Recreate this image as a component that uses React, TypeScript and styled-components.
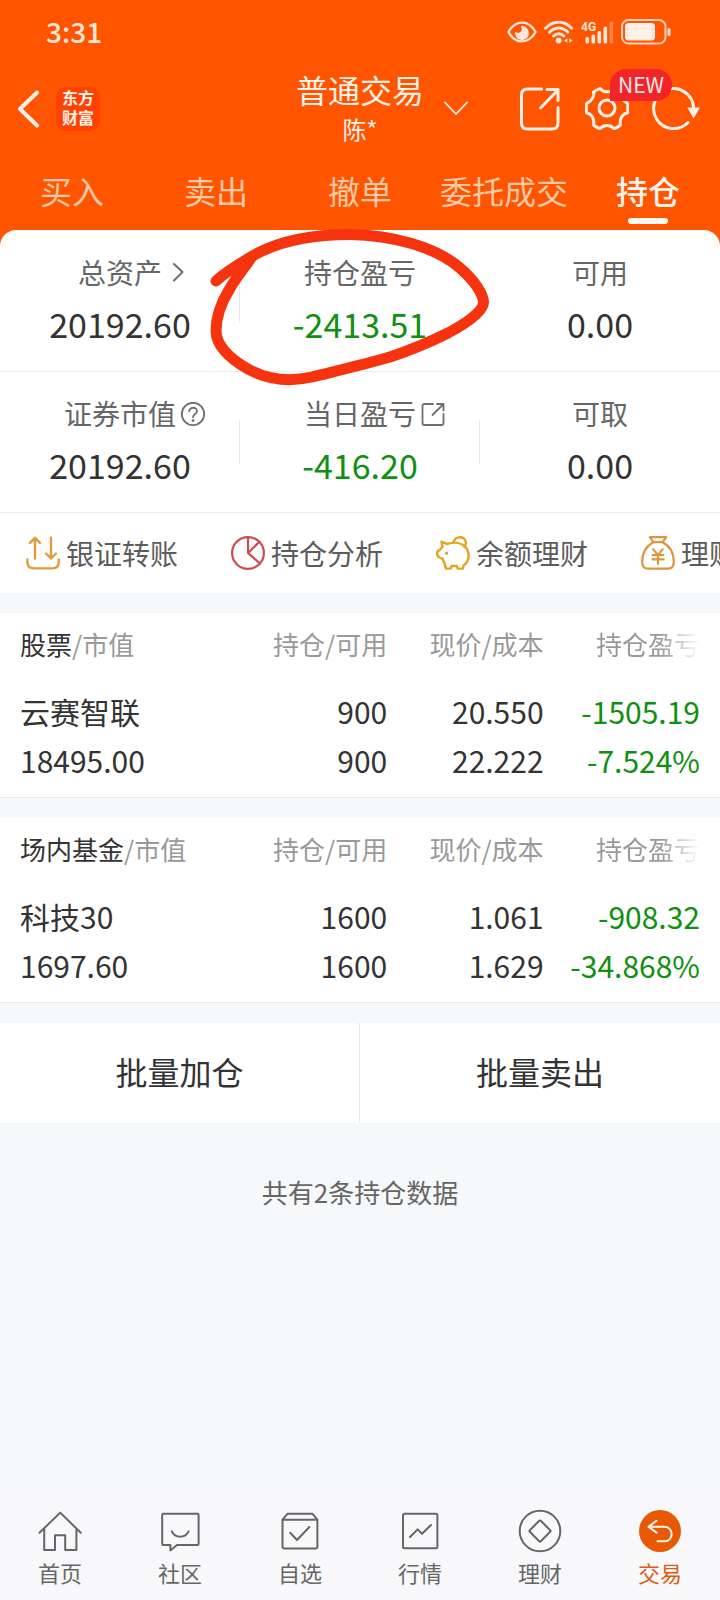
import React from "react";
import styled, { createGlobalStyle } from "styled-components";

const GlobalStyle = createGlobalStyle`
  *, *::before, *::after { box-sizing: border-box; }
  body {
    margin: 0;
    background: #f6f8fa;
    color: #333;
    font-family: "Noto Sans CJK SC", "Noto Sans", sans-serif;
    -webkit-font-smoothing: antialiased;
  }
  button {
    margin: 0;
    padding: 0;
    border: 0;
    background: none;
    color: inherit;
    font: inherit;
    cursor: pointer;
  }
  a { color: inherit; text-decoration: none; }
  svg { display: block; flex: none; }
`;

const Page = styled.div`
  min-height: 100vh;
  display: flex;
  flex-direction: column;
`;

/* ---------- header ---------- */

const Header = styled.header`
  background: #ff5500;
  color: #fff1e8;
  padding-bottom: 16px;
`;

const StatusBar = styled.div`
  height: 64px;
  padding: 0 49px 0 46px;
  display: flex;
  align-items: center;
  justify-content: space-between;
  color: #ffe6d6;
`;

const Clock = styled.time`
  padding-bottom: 2px;
  font-size: 28px;
  line-height: 40px;
  font-weight: 500;
`;

const StatusIcons = styled.div`
  display: flex;
  align-items: center;
  gap: 7px;
`;

const TitleBar = styled.div`
  height: 90px;
  display: grid;
  grid-template-columns: 1fr auto 1fr;
  align-items: center;
`;

const TitleStart = styled.div`
  display: flex;
  align-items: center;
  gap: 16px;
  padding-left: 17px;
`;

const Brand = styled.span`
  width: 44px;
  height: 44px;
  border-radius: 10px;
  background: #ff4203;
  display: flex;
  flex-direction: column;
  justify-content: center;
  text-align: center;
  font-family: "Liberation Serif", "Noto Sans CJK SC", serif;
  font-size: 16px;
  line-height: 20px;
  font-weight: 700;
`;

const TitleBlock = styled.div`
  padding-bottom: 2px;
  text-align: center;
`;

const Title = styled.h1`
  margin: 0;
  font-size: 32px;
  line-height: 42px;
  font-weight: 400;
`;

const Account = styled.div`
  font-size: 24px;
  line-height: 38px;
`;

const TitleEnd = styled.div`
  display: flex;
  align-items: center;
  justify-content: space-between;
  padding: 0 20px;
`;

const Actions = styled.div`
  display: flex;
  gap: 23px;
`;

const IconButton = styled.button<{ $raised?: boolean }>`
  position: relative;
  z-index: ${(p) => (p.$raised ? 1 : 0)};
  display: block;
`;

const NewBadge = styled.span`
  position: absolute;
  left: 25px;
  top: -18px;
  width: 62px;
  height: 32px;
  border-radius: 16px 16px 16px 0;
  background: #f02429;
  color: #ffe9e4;
  font-size: 21px;
  line-height: 31px;
  text-align: center;
`;

const Tabs = styled.nav`
  display: grid;
  grid-template-columns: repeat(5, 1fr);
  padding: 12px 0 6px;
`;

const Tab = styled.button<{ $active?: boolean }>`
  display: flex;
  flex-direction: column;
  align-items: center;
  gap: 4px;
  font-size: 32px;
  line-height: 48px;
  white-space: nowrap;
  color: ${(p) => (p.$active ? "#fff3ea" : "#ffc9a6")};
  font-weight: ${(p) => (p.$active ? 500 : 400)};

  &::after {
    content: "";
    width: 40px;
    height: 6px;
    border-radius: 3px;
    background: ${(p) => (p.$active ? "#fffaf3" : "transparent")};
  }
`;

/* ---------- summary ---------- */

const Summary = styled.section`
  position: relative;
  margin-top: -16px;
  padding-top: 1px;
  border-radius: 16px 16px 0 0;
  background: #fff;
`;

const SummaryRow = styled.div`
  display: grid;
  grid-template-columns: repeat(3, 1fr);
  border-bottom: 1px solid #ececec;
`;

const Metric = styled.div<{ $divider?: boolean }>`
  position: relative;
  padding: 21px 0 23px;
  text-align: center;

  &::after {
    content: "";
    display: ${(p) => (p.$divider ? "block" : "none")};
    position: absolute;
    right: 0;
    top: 48px;
    width: 1px;
    height: 44px;
    background: #e8e8e8;
  }
`;

const MetricLabel = styled.div`
  display: flex;
  justify-content: center;
  font-size: 28px;
  line-height: 40px;
  color: #666;
`;

const LabelText = styled.span`
  position: relative;
`;

const LabelIcon = styled.button`
  position: absolute;
  left: 100%;
  top: 9px;
  padding-left: 4px;
  color: #6e6e6e;
`;

const MetricValue = styled.div<{ $loss?: boolean }>`
  margin-top: 8px;
  font-size: 34px;
  line-height: 48px;
  color: ${(p) => (p.$loss ? "#0f900f" : "#333")};
`;

const Scribble = styled.svg`
  position: absolute;
  z-index: 2;
  left: calc(50% - 154px);
  top: -6px;
  pointer-events: none;
`;

/* ---------- shortcuts ---------- */

const Shortcuts = styled.nav`
  display: flex;
  gap: 53px;
  padding: 0 26px;
  background: #fff;
  overflow: hidden;
`;

const Shortcut = styled.button`
  flex: none;
  display: flex;
  align-items: center;
  gap: 6px;
  height: 80px;
  font-size: 28px;
  line-height: 40px;
  color: #5c5c5c;
`;

/* ---------- holdings ---------- */

const Holdings = styled.section`
  margin-top: 20px;
  padding: 0 20px;
  background: #fff;
  border-bottom: 1px solid #ececec;
`;

const Table = styled.table`
  width: 100%;
  table-layout: fixed;
  border-collapse: collapse;
`;

const Th = styled.th<{ $first?: boolean; $fade?: boolean }>`
  width: ${(p) => (p.$first ? "31%" : "23%")};
  height: 62px;
  padding: 0;
  font-size: 26px;
  line-height: 40px;
  font-weight: 400;
  white-space: nowrap;
  text-align: ${(p) => (p.$first ? "left" : "right")};
  color: #999;
  ${(p) =>
    p.$fade
      ? "mask-image: linear-gradient(to right, #000 calc(100% - 40px), transparent);"
      : ""}
`;

const Kind = styled.span`
  color: #333;
`;

const Td = styled.td<{ $first?: boolean; $loss?: boolean }>`
  padding: 12px 0;
  font-size: 30px;
  line-height: 49px;
  white-space: nowrap;
  text-align: ${(p) => (p.$first ? "left" : "right")};
  color: ${(p) => (p.$loss ? "#0f900f" : "#333")};
`;

const BatchActions = styled.div`
  margin-top: 20px;
  display: grid;
  grid-template-columns: 1fr 1fr;
  background: #fff;
`;

const BatchButton = styled.button`
  height: 100px;
  padding-bottom: 4px;
  font-size: 32px;
  line-height: 48px;

  &:first-child {
    border-right: 1px solid #e8e8e8;
  }
`;

const Count = styled.p`
  margin: 0;
  padding: 49px 0;
  text-align: center;
  font-size: 26px;
  line-height: 40px;
  color: #666;
`;

/* ---------- bottom bar ---------- */

const BottomNav = styled.nav`
  margin-top: auto;
  display: grid;
  grid-template-columns: repeat(6, 1fr);
  padding: 12px 0 13px;
  background: #f8f8fb;
`;

const NavItem = styled.a<{ $active?: boolean }>`
  display: flex;
  flex-direction: column;
  align-items: center;
  gap: 4px;
  font-size: 22px;
  line-height: 30px;
  color: ${(p) => (p.$active ? "#e05a10" : "#666")};
`;

/* ---------- icons ---------- */

const line = {
  fill: "none",
  stroke: "currentColor",
  strokeLinecap: "round" as const,
  strokeLinejoin: "round" as const,
};

const EyeIcon = () => (
  <svg width="30" height="22" viewBox="0 0 30 22" {...line} strokeWidth="2.4">
    <path d="M1.4 11C5 4.8 9.8 1.6 15 1.6S25 4.8 28.6 11C25 17.2 20.2 20.4 15 20.4S5 17.2 1.4 11Z" />
    <path
      d="M14 5.2A7 7 0 1 1 8.2 10.4C9.6 12.2 12.6 12.4 14 10.6C15 9.2 15 7 14 5.2Z"
      fill="currentColor"
      stroke="none"
    />
  </svg>
);

const WifiIcon = () => (
  <svg width="30" height="24" viewBox="0 0 30 24" {...line} strokeWidth="3">
    <path d="M1.6 8.2C9 .2 20.4 .2 27.6 8.2M5.6 12.2C11 6.6 18.4 6.6 23.8 12.2M9.6 16C12.6 13 16.8 13 19.8 16" />
    <circle cx="14.6" cy="20.6" r="3" fill="currentColor" stroke="none" />
    <path
      d="M23.4 18.2V23L20 20.6ZM25.2 18.2V23L28.8 20.6Z"
      fill="currentColor"
      stroke="none"
    />
  </svg>
);

const SignalText = styled.text`
  font-family: Roboto, sans-serif;
  font-size: 12px;
  font-weight: 700;
`;

const SignalIcon = () => (
  <svg width="33" height="24" viewBox="0 0 33 24" fill="currentColor">
    <SignalText x="0" y="11">
      4G
    </SignalText>
    <rect x="4.5" y="17" width="3.6" height="6.5" rx="1.5" />
    <rect x="10.5" y="14.5" width="3.6" height="9" rx="1.5" />
    <rect x="16.5" y="11" width="3.6" height="12.5" rx="1.5" />
    <rect x="22.5" y="6.5" width="3.6" height="17" rx="1.5" />
    <rect x="28.5" y="1.5" width="3.6" height="22" rx="1.5" opacity="0.35" />
  </svg>
);

const BatteryIcon = () => (
  <svg width="50" height="26" viewBox="0 0 50 26" fill="currentColor">
    <rect
      x="1"
      y="1"
      width="43.5"
      height="23.5"
      rx="6.5"
      fill="none"
      stroke="currentColor"
      strokeWidth="2"
      opacity="0.85"
    />
    <rect x="4" y="4" width="30" height="17.5" rx="3.5" fill="#ffefe6" />
    <rect x="46.5" y="9" width="3" height="8" rx="1.5" />
  </svg>
);

const BackIcon = () => (
  <svg width="23" height="38" viewBox="0 0 23 38" {...line} strokeWidth="4">
    <path d="M20 2.5L3 19L20 35.5" />
  </svg>
);

const DownIcon = () => (
  <svg width="24" height="16" viewBox="0 0 24 16" {...line} strokeWidth="1.8">
    <path d="M1 1.5L12 13L23 1.5" />
  </svg>
);

const ShareIcon = () => (
  <svg width="44" height="44" viewBox="0 0 44 44" {...line} strokeWidth="3">
    <path d="M23.5 2H9.5Q3.5 2 3.5 8V36Q3.5 42 9.5 42H34Q40 42 40 36V20.5" />
    <path d="M22.5 21L40 3M29 2.5H40V13.5" />
  </svg>
);

const GearIcon = () => (
  <svg width="44" height="44" viewBox="0 0 44 44" {...line} strokeWidth="3">
    <path d="M15 1.6Q18 4.8 22 4.8T29 1.6Q32.5 2.4 35.5 5.2Q34.6 8 36.4 10.8T42.6 16.6Q43.2 21 42.6 26Q38.6 26.6 36.6 30T35.5 38Q32.5 40.6 29 41.6Q26 38.6 22 38.6T15 41.6Q11.5 40.6 8.5 38Q9.4 33.4 7.4 30T1.6 26Q.8 21 1.6 16.6Q5.6 14.4 7.5 11.2T8.5 5.2Q11.5 2.4 15 1.6Z" />
    <circle cx="22" cy="21" r="8" />
  </svg>
);

const RefreshIcon = () => (
  <svg width="48" height="44" viewBox="0 0 48 44" {...line} strokeWidth="3">
    <path d="M36 35.5A20 20 0 1 1 41.6 20.5" />
    <path d="M35.2 20.5H48L41.6 31.5Z" fill="currentColor" stroke="none" />
  </svg>
);

const ChevronIcon = () => (
  <svg width="18" height="22" viewBox="0 0 18 22" {...line} strokeWidth="2">
    <path d="M8 3L16.5 11L8 19.5" />
  </svg>
);

const HelpIcon = () => (
  <svg width="26" height="26" viewBox="0 0 26 26" {...line} strokeWidth="1.8">
    <circle cx="13" cy="12" r="11.2" />
    <path d="M9.2 9.4C9.4 4.6 17 4.6 17 9.2C17 12 13 12 13 15.2" />
    <circle cx="13" cy="18.6" r="1.4" fill="currentColor" stroke="none" />
  </svg>
);

const OutIcon = () => (
  <svg width="26" height="26" viewBox="0 0 26 26" {...line} strokeWidth="1.8">
    <path d="M13 2H4.5Q2.5 2 2.5 4V21Q2.5 23 4.5 23H21.5Q23.5 23 23.5 21V12" />
    <path d="M12.5 13L23.5 2M17 2H23.5V8.5" />
  </svg>
);

const TransferIcon = () => (
  <svg width="34" height="34" viewBox="0 0 34 34" {...line} stroke="#e09c3c" strokeWidth="2.4">
    <path d="M9 22.5V1.8M4 6.8L9 1.8L14 6.8M25 1.8V22.5M20 17.5L25 22.5L30 17.5" />
    <path d="M1.4 23.5V26Q1.4 32.4 8 32.4H26.5Q32.8 32.4 32.8 26V23.5" />
  </svg>
);

const PieIcon = () => (
  <svg width="34" height="34" viewBox="0 0 34 34" {...line} stroke="#cf4b50" strokeWidth="2.2">
    <circle cx="17" cy="17" r="15.9" />
    <path d="M17 1V17L28.5 5.8M17 17L29 27.5" />
  </svg>
);

const PiggyIcon = () => (
  <svg width="34" height="34" viewBox="0 0 34 34" {...line} stroke="#e2a41c" strokeWidth="2.4">
    <path d="M5.5 5.8L11.5 8Q15 6.4 19 6.6C27 7 32.6 12 32.6 19.5C32.6 24 31 27 27.6 29.5L26.8 32.6H21.8L20.8 30H15.6L14.6 32.6H10L8.6 27.5L6.5 22.8L3.5 21.5Q1.2 20.5 1.2 17.5T3.4 14.2L6.5 10.8Z" />
    <path d="M17.5 6.4C18.5 .4 26.5 -.2 29.2 4.2C30.4 6.6 30 9 28.4 10.8" />
    <circle cx="10.5" cy="17.2" r="1.6" fill="#d8a040" stroke="none" />
  </svg>
);

const MoneyBagIcon = () => (
  <svg width="34" height="34" viewBox="0 0 34 34" {...line} stroke="#dc9640" strokeWidth="2.2">
    <path d="M8.8 1.2H25.2L21.6 6.2H12.4Z" />
    <path d="M12.4 6.2C5 10 1.2 17 1.2 26Q1.2 32.6 7 32.6H27Q32.8 32.6 32.8 26C32.8 17 29 10 21.6 6.2" />
    <path d="M12.2 13.4L17 19L21.6 13.4M17 19V28M11.5 19H22.5M11.5 23.4H22.5" />
  </svg>
);

const HomeIcon = () => (
  <svg width="44" height="44" viewBox="0 0 44 44" {...line} strokeWidth="2">
    <path d="M1.5 23.8L22.2 3.6L42.8 23.8M6.2 20V41H17V26.2H27.2V41H38.4V20" />
  </svg>
);

const ChatIcon = () => (
  <svg width="44" height="44" viewBox="0 0 44 44" {...line} strokeWidth="2">
    <path d="M5.2 4.8H39.5Q40.6 4.8 40.6 6V35Q40.6 36 39.5 36H19L12.4 41.4V36H5.2Q4.2 36 4.2 35V6Q4.2 4.8 5.2 4.8Z" />
    <path d="M13.8 22.4C17 29.4 27.4 29.4 30.6 22.4" />
  </svg>
);

const PickIcon = () => (
  <svg width="44" height="44" viewBox="0 0 44 44" {...line} strokeWidth="2">
    <path d="M4.5 10.6L9.4 4.8H34.6L39.4 10.6V37.5Q39.4 39.4 37.5 39.4H6.5Q4.5 39.4 4.5 37.5ZM4.5 10.8H39.4" />
    <path d="M12.2 23.8L19 31L31.4 18" />
  </svg>
);

const MarketIcon = () => (
  <svg width="44" height="44" viewBox="0 0 44 44" {...line} strokeWidth="2">
    <rect x="5" y="4.8" width="34.4" height="34.4" rx="1.5" />
    <path d="M12 28L19.6 20.4L24 24.8L33 16" />
  </svg>
);

const WealthIcon = () => (
  <svg width="44" height="44" viewBox="0 0 44 44" {...line} strokeWidth="2">
    <circle cx="22" cy="22" r="20.3" />
    <path d="M21.2 11.8Q22 11 22.8 11.8L32.2 21.2Q33 22 32.2 22.8L22.8 32.2Q22 33 21.2 32.2L11.8 22.8Q11 22 11.8 21.2Z" />
  </svg>
);

const TradeIcon = () => (
  <svg width="44" height="44" viewBox="0 0 44 44" {...line} stroke="#fff3e8" strokeWidth="2">
    <circle cx="22" cy="22" r="21" fill="#e65a05" stroke="none" />
    <path d="M18.5 11.8L10.5 17.8L18.5 23.6M10.5 17.8H26.5C36 17.8 36 32.3 26.5 32.3H19.5" />
  </svg>
);

/* ---------- data ---------- */

type MetricData = {
  label: string;
  value: string;
  loss?: boolean;
  divider?: boolean;
  icon?: React.ReactNode;
  action?: string;
};

const summary: MetricData[][] = [
  [
    { label: "总资产", value: "20192.60", divider: true, icon: <ChevronIcon />, action: "资产详情" },
    { label: "持仓盈亏", value: "-2413.51", loss: true },
    { label: "可用", value: "0.00" },
  ],
  [
    { label: "证券市值", value: "20192.60", divider: true, icon: <HelpIcon />, action: "说明" },
    { label: "当日盈亏", value: "-416.20", loss: true, divider: true, icon: <OutIcon />, action: "分享" },
    { label: "可取", value: "0.00" },
  ],
];

const tabs = ["买入", "卖出", "撤单", "委托成交", "持仓"];

const shortcuts = [
  { label: "银证转账", icon: <TransferIcon /> },
  { label: "持仓分析", icon: <PieIcon /> },
  { label: "余额理财", icon: <PiggyIcon /> },
  { label: "理财", icon: <MoneyBagIcon /> },
];

const holdings = [
  {
    kind: "股票",
    name: "云赛智联",
    worth: "18495.00",
    held: "900",
    free: "900",
    price: "20.550",
    cost: "22.222",
    gain: "-1505.19",
    rate: "-7.524%",
  },
  {
    kind: "场内基金",
    name: "科技30",
    worth: "1697.60",
    held: "1600",
    free: "1600",
    price: "1.061",
    cost: "1.629",
    gain: "-908.32",
    rate: "-34.868%",
  },
];

const navItems = [
  { label: "首页", icon: <HomeIcon /> },
  { label: "社区", icon: <ChatIcon /> },
  { label: "自选", icon: <PickIcon /> },
  { label: "行情", icon: <MarketIcon /> },
  { label: "理财", icon: <WealthIcon /> },
  { label: "交易", icon: <TradeIcon />, active: true },
];

export default function App() {
  return (
    <Page>
      <GlobalStyle />
      <Header>
        <StatusBar>
          <Clock>3:31</Clock>
          <StatusIcons>
            <EyeIcon />
            <WifiIcon />
            <SignalIcon />
            <BatteryIcon />
          </StatusIcons>
        </StatusBar>
        <TitleBar>
          <TitleStart>
            <IconButton aria-label="返回">
              <BackIcon />
            </IconButton>
            <Brand>
              <span>东方</span>
              <span>财富</span>
            </Brand>
          </TitleStart>
          <TitleBlock>
            <Title>普通交易</Title>
            <Account>陈*</Account>
          </TitleBlock>
          <TitleEnd>
            <IconButton aria-label="切换账户">
              <DownIcon />
            </IconButton>
            <Actions>
              <IconButton aria-label="分享">
                <ShareIcon />
              </IconButton>
              <IconButton aria-label="设置" $raised>
                <GearIcon />
                <NewBadge>NEW</NewBadge>
              </IconButton>
              <IconButton aria-label="刷新">
                <RefreshIcon />
              </IconButton>
            </Actions>
          </TitleEnd>
        </TitleBar>
        <Tabs>
          {tabs.map((tab) => (
            <Tab key={tab} $active={tab === "持仓"}>
              {tab}
            </Tab>
          ))}
        </Tabs>
      </Header>

      <Summary>
        {summary.map((row, i) => (
          <SummaryRow key={i}>
            {row.map((m) => (
              <Metric key={m.label} $divider={m.divider}>
                <MetricLabel>
                  <LabelText>
                    {m.label}
                    {m.icon && <LabelIcon aria-label={m.action}>{m.icon}</LabelIcon>}
                  </LabelText>
                </MetricLabel>
                <MetricValue $loss={m.loss}>{m.value}</MetricValue>
              </Metric>
            ))}
          </SummaryRow>
        ))}
        <Scribble width="288" height="166" viewBox="206 224 288 166" aria-hidden="true">
          <path
            d="M216 281C226 272 242 262 256 254C284 239 318 234.5 350 234.5C392 235 436 247 460 268C475 281 483 294 483.5 302C484 312 463 325 448 333C426 344 408 351 390 357C362 365 336 371 312 377C290 382 268 380 248 369C228 358 216 344 216 331C216 316 221 303 229 290C235 279 242 271 251 258"
            fill="none"
            stroke="#f5340f"
            strokeWidth="11"
            strokeLinecap="round"
            strokeLinejoin="round"
          />
        </Scribble>
      </Summary>

      <Shortcuts>
        {shortcuts.map((s) => (
          <Shortcut key={s.label}>
            {s.icon}
            {s.label}
          </Shortcut>
        ))}
      </Shortcuts>

      {holdings.map((h) => (
        <Holdings key={h.kind}>
          <Table>
            <thead>
              <tr>
                <Th $first>
                  <Kind>{h.kind}</Kind>/市值
                </Th>
                <Th>持仓/可用</Th>
                <Th>现价/成本</Th>
                <Th $fade>持仓盈亏</Th>
              </tr>
            </thead>
            <tbody>
              <tr>
                <Td $first>
                  {h.name}
                  <br />
                  {h.worth}
                </Td>
                <Td>
                  {h.held}
                  <br />
                  {h.free}
                </Td>
                <Td>
                  {h.price}
                  <br />
                  {h.cost}
                </Td>
                <Td $loss>
                  {h.gain}
                  <br />
                  {h.rate}
                </Td>
              </tr>
            </tbody>
          </Table>
        </Holdings>
      ))}

      <BatchActions>
        <BatchButton>批量加仓</BatchButton>
        <BatchButton>批量卖出</BatchButton>
      </BatchActions>

      <Count>共有2条持仓数据</Count>

      <BottomNav>
        {navItems.map((n) => (
          <NavItem key={n.label} href="#" $active={n.active}>
            {n.icon}
            {n.label}
          </NavItem>
        ))}
      </BottomNav>
    </Page>
  );
}
